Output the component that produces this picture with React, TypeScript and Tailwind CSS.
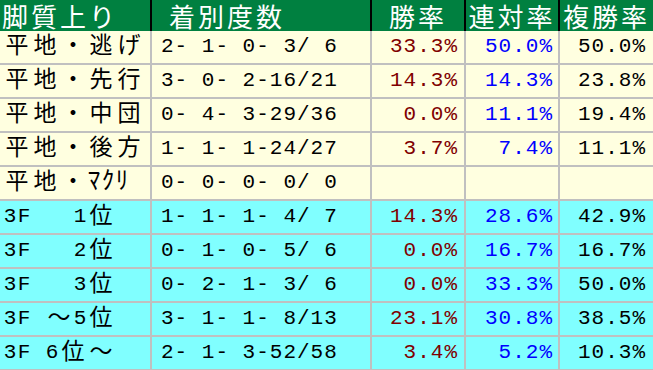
import React from "react";

type Row = {
  label: string;
  rec: string;
  win: string;
  ren: string;
  fuku: string;
  cyan?: boolean;
};

const rows: Row[] = [
  { label: "平地・逃げ", rec: "2- 1- 0- 3/ 6", win: "33.3%", ren: "50.0%", fuku: "50.0%" },
  { label: "平地・先行", rec: "3- 0- 2-16/21", win: "14.3%", ren: "14.3%", fuku: "23.8%" },
  { label: "平地・中団", rec: "0- 4- 3-29/36", win: "0.0%", ren: "11.1%", fuku: "19.4%" },
  { label: "平地・後方", rec: "1- 1- 1-24/27", win: "3.7%", ren: "7.4%", fuku: "11.1%" },
  { label: "平地・ﾏｸﾘ", rec: "0- 0- 0- 0/ 0", win: "", ren: "", fuku: "" },
  { label: "3F   1位", rec: "1- 1- 1- 4/ 7", win: "14.3%", ren: "28.6%", fuku: "42.9%", cyan: true },
  { label: "3F   2位", rec: "0- 1- 0- 5/ 6", win: "0.0%", ren: "16.7%", fuku: "16.7%", cyan: true },
  { label: "3F   3位", rec: "0- 2- 1- 3/ 6", win: "0.0%", ren: "33.3%", fuku: "50.0%", cyan: true },
  { label: "3F ～5位", rec: "3- 1- 1- 8/13", win: "23.1%", ren: "30.8%", fuku: "38.5%", cyan: true },
  { label: "3F 6位～", rec: "2- 1- 3-52/58", win: "3.4%", ren: "5.2%", fuku: "10.3%", cyan: true },
];

const mono = "font-['Liberation_Mono','Noto_Sans_CJK_JP',monospace]";
const cols = "grid grid-cols-[150px_218px_92px_92px_93px]";

const code = (ch: string) => ch.codePointAt(0) ?? 0;
// full width chars take two columns, like a fixed pitch gothic
const isKana = (ch: string) => code(ch) >= 0xff61 && code(ch) <= 0xff9f;
const isWide = (ch: string) => code(ch) > 0xff && !isKana(ch);

const Label = ({ text }: { text: string }) => (
  <span className="flex items-center">
    {Array.from(text).map((ch, i) => {
      if (isWide(ch))
        return (
          <span key={i} className="inline-block w-[28px] text-center text-[23px]">
            {ch}
          </span>
        );
      return (
        <span
          key={i}
          className={`inline-block w-[14px] text-center whitespace-pre ${isKana(ch) ? "text-[25px]" : "text-[21px]"}`}
        >
          {ch}
        </span>
      );
    })}
  </span>
);

const Header = () => (
  <div className={`${cols} h-[31px] gap-x-[2px] bg-black text-white font-['Noto_Sans_CJK_JP',sans-serif] text-[26px] leading-[31px] tracking-[3px]`}>
    <div className="flex items-center bg-[#008040] pl-[2px]">脚質上り</div>
    <div className="flex items-center bg-[#008040] pl-[17px]">着別度数</div>
    <div className="flex items-center justify-center bg-[#008040]">勝率</div>
    <div className="flex items-center justify-center bg-[#008040]">連対率</div>
    <div className="flex items-center justify-center bg-[#008040]">複勝率</div>
  </div>
);

const BodyRow = ({ row }: { row: Row }) => {
  const bg = row.cyan ? "bg-[#80ffff]" : "bg-[#ffffe0]";
  const pct = `flex items-center justify-end ${bg} text-[21px] tracking-[1px]`;
  return (
    <>
      <div className={`flex items-center ${bg} pl-[3px] text-black`}>
        <Label text={row.label} />
      </div>
      <div className={`flex items-center ${bg} pl-[9px] text-[21px] tracking-[1px] whitespace-pre text-black`}>
        {row.rec}
      </div>
      <div className={`${pct} pr-[6px] text-[#800000]`}>{row.win}</div>
      <div className={`${pct} pr-[5px] text-[#0000ff]`}>{row.ren}</div>
      <div className={`${pct} pr-[7px] text-black`}>{row.fuku}</div>
    </>
  );
};

export default function App() {
  return (
    <div className="h-[370px] w-[653px] overflow-hidden bg-[#c0c0c0]">
      <Header />
      <div className={`${cols} auto-rows-[32px] gap-[2px] leading-[32px] ${mono}`}>
        {rows.map((row) => (
          <BodyRow key={row.label} row={row} />
        ))}
      </div>
    </div>
  );
}
